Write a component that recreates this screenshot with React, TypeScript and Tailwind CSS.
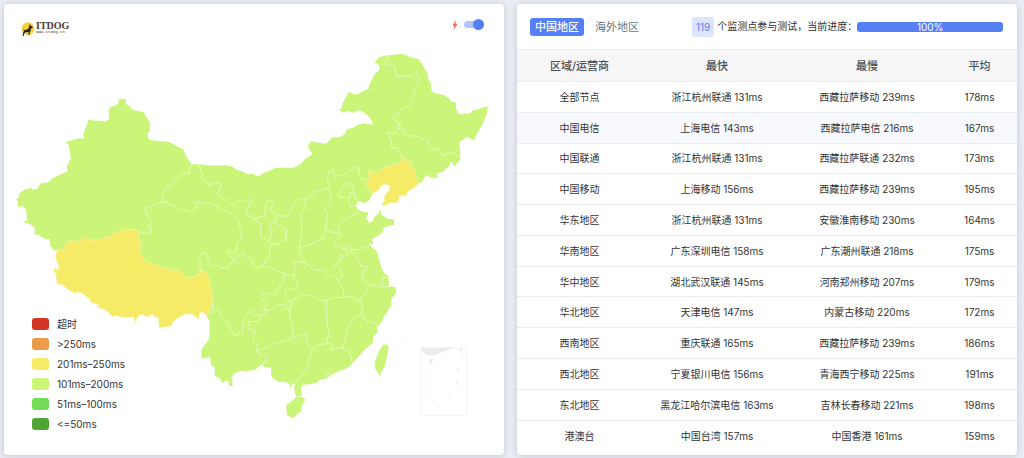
/**
 * Network latency dashboard
 *
 * Left card: provinces coloured by response time.
 * Right card: fastest / slowest / average time per region and carrier.
 */

import { useState } from "react";
import clsx from "clsx";

// =============================================================================
// DATA
// =============================================================================

const legend = [
  { label: "超时", color: "bg-[#d43527]" },
  { label: ">250ms", color: "bg-[#e99c4c]" },
  { label: "201ms–250ms", color: "bg-[#f5eb66]" },
  { label: "101ms–200ms", color: "bg-[#caf578]" },
  { label: "51ms–100ms", color: "bg-[#73db57]" },
  { label: "<=50ms", color: "bg-[#51a436]" },
];

const rows = [
  { region: "全部节点", fastest: "浙江杭州联通 131ms", slowest: "西藏拉萨移动 239ms", average: "178ms" },
  { region: "中国电信", fastest: "上海电信 143ms", slowest: "西藏拉萨电信 216ms", average: "167ms" },
  { region: "中国联通", fastest: "浙江杭州联通 131ms", slowest: "西藏拉萨联通 232ms", average: "173ms" },
  { region: "中国移动", fastest: "上海移动 156ms", slowest: "西藏拉萨移动 239ms", average: "195ms" },
  { region: "华东地区", fastest: "浙江杭州联通 131ms", slowest: "安徽淮南移动 230ms", average: "164ms" },
  { region: "华南地区", fastest: "广东深圳电信 158ms", slowest: "广东潮州联通 218ms", average: "175ms" },
  { region: "华中地区", fastest: "湖北武汉联通 145ms", slowest: "河南郑州移动 207ms", average: "179ms" },
  { region: "华北地区", fastest: "天津电信 147ms", slowest: "内蒙古移动 220ms", average: "172ms" },
  { region: "西南地区", fastest: "重庆联通 165ms", slowest: "西藏拉萨移动 239ms", average: "186ms" },
  { region: "西北地区", fastest: "宁夏银川电信 156ms", slowest: "青海西宁移动 225ms", average: "191ms" },
  { region: "东北地区", fastest: "黑龙江哈尔滨电信 163ms", slowest: "吉林长春移动 221ms", average: "198ms" },
  { region: "港澳台", fastest: "中国台湾 157ms", slowest: "中国香港 161ms", average: "159ms" },
];

// Outer coast and land border; the southwest part runs underneath Tibet
const mainland =
  "M50 598L60 592 58 582 70 573 80 566 86 568 96 561 99 569 114 567 120 556 127 548 144 548 153 542 158 535 203 515 203 494 209 489 210 482 215 478 208 435 199 426 240 414 255 418 252 403 268 358 283 362 306 362 316 365 326 360 330 354 328 330 333 322 352 314 358 310 357 298 378 296 380 312 390 318 400 330 422 334 435 339 441 352 450 363 453 375 450 383 453 392 445 398 446 410 450 419 470 422 510 426 538 442 552 447 560 468 577 493 598 493 645 497 683 496 702 501 712 511 727 513 742 522 763 521 768 527 777 529 793 519 832 503 882 503 902 494 915 479 939 463 926 440 935 423 960 429 980 431 998 412 1020 412 1036 403 1044 387 1062 383 1070 377 1090 370 1120 374 1118 362 1107 348 1088 333 1072 331 1062 339 1048 333 1032 338 1020 329 1027 324 1030 310 1048 276 1070 284 1108 266 1109 255 1120 235 1128 218 1138 212 1141 206 1138 193 1125 187 1140 172 1156 167 1208 161 1238 173 1257 177 1266 188 1276 206 1286 224 1287 238 1294 248 1296 268 1302 278 1335 286 1350 296 1356 305 1369 306 1371 326 1378 342 1412 340 1422 331 1440 327 1457 320 1471 318 1464 325 1463 342 1458 348 1453 365 1445 380 1433 400 1425 421 1401 411 1380 427 1384 472 1380 485 1370 490 1368 500 1360 494 1360 486 1352 488 1350 500 1340 505 1332 516 1313 519 1314 535 1290 531 1282 524 1272 538 1267 548 1258 550 1240 566 1224 575 1222 586 1200 588 1196 607 1170 609 1155 618 1147 610 1156 605 1155 590 1172 567 1170 556 1155 552 1142 560 1138 570 1120 580 1110 600 1095 610 1078 604 1070 615 1074 628 1090 635 1106 637 1106 643 1100 655 1110 668 1120 663 1126 650 1136 642 1143 628 1147 645 1165 656 1184 658 1184 674 1165 678 1150 686 1152 696 1140 704 1118 718 1122 732 1110 732 1117 742 1132 753 1140 780 1147 806 1156 820 1167 828 1169 858 1188 862 1191 880 1176 896 1176 918 1168 924 1165 936 1154 948 1148 965 1132 983 1135 995 1122 1010 1120 1030 1100 1045 1084 1063 1060 1090 1045 1104 1015 1115 995 1125 980 1137 960 1140 950 1150 910 1155 904 1165 908 1187 890 1190 885 1170 886 1152 878 1152 873 1167 870 1152 858 1146 840 1146 820 1135 815 1125 816 1104 795 1100 788 1093 775 1102 768 1110 755 1111 740 1115 732 1111 720 1114 703 1122 698 1130 700 1158 690 1158 688 1142 678 1142 668 1150 662 1134 645 1128 647 1102 635 1095 632 1070 607 1076 606 1050 630 1015 631 965 620 944 618 870 560 860 440 840 300 780 200 760 175 750 165 752 153 738 152 717 135 716 118 705 106 703 107 685 92 672 72 667 84 660 80 628 70 619 56 621 55 605Z";

const tibet =
  "M175 750L192 748 208 722 242 724 257 710 272 720 300 720 320 710 335 710 345 698 375 689 405 688 422 698 416 710 424 728 423 758 433 776 445 788 465 792 485 802 505 805 525 812 542 808 553 825 560 834 575 830 585 834 590 825 601 824 602 810 617 815 628 832 632 840 630 855 638 870 640 910 630 922 632 942 620 944 606 935 600 940 598 957 590 952 580 943 560 941 540 950 522 965 515 978 480 983 477 952 465 950 460 942 445 950 430 944 420 946 410 958 406 971 402 950 385 952 365 951 350 946 342 950 336 948 330 938 315 928 298 924 296 912 280 910 270 896 255 885 245 878 233 876 228 882 212 872 190 856 173 850 170 825 162 808 170 806 175 811 180 802 168 770Z";

const liaoning =
  "M1210 473L1222 478 1224 490 1235 486 1240 505 1247 512 1248 528 1256 540 1258 550 1240 566 1224 575 1222 586 1200 588 1196 607 1170 609 1155 618 1147 610 1156 605 1155 590 1172 567 1170 556 1155 552 1142 560 1138 570 1120 580 1110 565 1098 552 1110 538 1108 510 1118 510 1126 523 1155 502 1185 494 1205 486Z";

const hainan =
  "M890 1192L905 1190 918 1198 912 1210 906 1222 906 1235 892 1242 885 1253 875 1252 862 1244 861 1215 875 1205Z";

const taiwan =
  "M1160 1033L1168 1040 1165 1060 1156 1100 1146 1115 1142 1133 1138 1120 1126 1105 1127 1085 1140 1050 1150 1036Z";

// Province boundaries inside the mainland
const borders = [
  // Northwest
  "M577 493L570 505 572 517 548 523 525 542 518 555 500 560 485 608 465 614 433 626 442 632 443 645 460 668 447 678 455 687 454 700 430 698 418 694",
  "M485 608L502 604 508 613 525 617 538 629 562 631 576 636 588 628 592 608 606 608 620 612 635 609 650 619 665 627 680 632 705 648 720 663 721 680 729 698 723 717 716 728 712 745 705 760 694 755 682 754 692 768 702 775 706 782 690 792 688 802 670 805 658 797 642 798 628 787 622 763 610 758 600 770 603 782 602 808",
  "M706 782L720 767 728 757 740 770 757 775 763 800 780 804 792 797",
  "M598 493L610 527 605 532 625 545 627 557 650 547 665 553 664 565 652 580 675 597 688 612 702 617 710 606 740 604 754 597 755 610 742 630 742 642 764 657",
  "M764 657L778 652 796 648 797 625 805 603 815 600 820 608 814 632 830 642 848 650 868 645 875 628 890 605 900 598 920 596",
  "M764 657L782 670 786 710 810 725 812 710 820 708 813 690 812 670 825 667 830 660 830 642",
  "M825 667L862 690 860 720 842 725 838 733 815 730 810 750 812 775 798 780 792 797",
  // North
  "M920 596L916 625 903 648 908 665 905 710 900 745 908 775 922 792",
  "M920 596L927 588 940 588 947 573 970 570 988 563 992 555 984 540 988 515 1000 512 1007 530 1030 525 1045 518 1068 498 1078 505 1082 530 1088 538 1108 538",
  "M988 563L993 580 997 600 988 614 975 630 985 645 978 690 970 717 940 730 900 745",
  "M978 690L1000 697 1017 698 1020 675 1042 655 1062 645 1078 635",
  "M1042 547L1058 557 1063 575 1053 578 1052 592 1022 592 1018 582 1030 560Z",
  "M1053 578L1065 577 1066 590 1075 603 1070 618 1054 620 1048 605 1052 592",
  // Northeast
  "M1163 167L1168 180 1153 192 1172 197 1185 200 1193 230 1235 228 1250 220 1260 238 1245 270 1243 295 1229 323 1220 319 1180 353 1198 370 1197 385 1212 385 1222 408 1240 407 1260 412 1285 418 1290 435 1305 450 1315 442 1330 468 1350 458 1365 460 1384 472",
  "M1195 372L1206 362M1196 374L1208 372",
  "M1198 385L1188 400 1165 397 1175 420 1178 445 1195 442 1205 470",
  // Centre and east
  "M1017 698L1028 702 1005 728 1022 744 1038 745 1045 736 1060 750 1082 748 1090 738 1105 742 1112 732",
  "M1038 745L1065 762 1080 780 1085 800 1105 800 1103 810 1090 812 1088 835 1115 855 1145 862 1150 858 1169 861",
  "M1038 745L1045 765 1032 772 1024 762 1020 785 1005 795 1025 807 1028 828 1017 840",
  "M922 792L945 810 975 812 985 828 1000 826 1017 840 1033 870 1033 892",
  "M922 792L912 786 882 788 892 800 882 818 885 825 882 832 895 848 890 865 858 872 858 895 876 908",
  "M792 797L815 805 840 815 855 820 872 828 885 825",
  "M855 820L855 840 840 860 828 882 810 882 792 877 785 895 805 910 792 930 810 932 835 915 855 912 870 935 876 908",
  "M876 908L880 900 910 885 935 888 960 900 985 902 1000 893 1033 892 1050 888 1082 903 1095 880 1110 862 1115 855",
  "M1148 860L1150 832 1167 834",
  "M985 902L980 930 983 970 988 1000 982 1030 1000 1032 995 1050 1012 1045 1030 1045 1050 1055 1060 1090",
  "M1082 903L1088 920 1088 942 1100 962 1122 968 1136 980",
  "M1088 942L1062 955 1045 985 1038 1015 1030 1045",
  // South and southwest
  "M876 908L870 945 880 980 880 1013 920 1002 922 1030 938 1050 955 1036 982 1030",
  "M880 1013L860 1022 825 1030 805 1042 772 1052 775 1030 760 1020 768 992 745 985 750 965 780 965 785 945 802 938 790 925 810 932",
  "M640 910L640 938 655 925 665 950 685 965 705 1008 728 1000 732 960 755 930 762 945 785 945",
  "M772 1052L785 1065 802 1070 802 1085 788 1093",
  "M938 1050L925 1100 895 1142 880 1152",
  "M980 1132L984 1119 994 1118 998 1128 986 1130",
];

// =============================================================================
// MAP CARD
// =============================================================================

function Logo() {
  return (
    <a href="#" className="flex items-center gap-px pt-2 text-[#4a3c38]">
      <svg viewBox="0 0 42 42" className="size-3.5" aria-hidden="true">
        <circle cx="21" cy="20" r="19" fill="#f3cf3c" />
        <path
          d="M26 6l3 5 6 3-1 4-5 2 0 7-3 4 0 8-3 0-1-9-9 1-4 5 0 5-4 1 1-9 3-6-2-6 3 3 7-1 6-4z"
          fill="#2c2620"
        />
      </svg>
      <span className="flex flex-col">
        <span className="font-['Liberation_Serif',serif] text-[10px] leading-[8px] font-bold">ITDOG</span>
        <span className="font-['Liberation_Mono',monospace] text-[4px] leading-[5px]">www.itdog.cn</span>
      </span>
    </a>
  );
}

function ChinaMap() {
  return (
    <svg viewBox="14 135 1500 1220" className="block w-full" role="img" aria-label="中国地区">
      <g strokeLinejoin="round" strokeLinecap="round">
        <path d={mainland} fill="#caf578" />
        <path d={hainan} fill="#caf578" />
        <path d={taiwan} fill="#caf578" />
        <path d={borders.join("")} fill="none" stroke="#e4fabb" strokeWidth="3" />
        <path d={tibet} fill="#f5eb66" stroke="#faf5b4" strokeWidth="2" />
        <path d={liaoning} fill="#f5eb66" stroke="#faf5b4" strokeWidth="2" />
        <path d="M890 1190L908 1188" stroke="#e4fabb" strokeWidth="3" />
      </g>

      {/* South China Sea inset */}
      <rect x="1264" y="1042" width="138" height="204" fill="none" stroke="#f4f4f4" strokeWidth="3" />
      <g fill="#ececec">
        <path d="M1266 1044L1360 1044 1330 1056 1300 1067 1280 1064 1266 1052Z" />
        <path d="M1290 1080L1302 1075 1299 1088 1290 1091ZM1379 1044L1390 1044 1386 1056Z" />
        <circle cx="1210" cy="1015" r="3" />
      </g>
      <path
        d="M1396 1060L1389 1075M1378 1104L1377 1116M1375 1143L1371 1155M1356 1182L1347 1197M1324 1221L1314 1224M1278 1185L1281 1194M1290 1157L1299 1148M1291 1115L1294 1122"
        fill="none"
        stroke="#eeeeee"
        strokeWidth="3"
      />
    </svg>
  );
}

function MapCard() {
  return (
    <section className="relative rounded bg-white shadow-[0_1px_6px_rgba(60,70,100,0.22)]">
      <header className="flex h-[41px] items-center justify-between pr-5 pl-[17px]">
        <Logo />
        <label className="flex items-center gap-1.5">
          <svg viewBox="0 0 18 30" className="h-2.5 w-1.5" aria-label="fast mode">
            <path d="M12 0L1 17 7 17 5 30 17 11 10 11Z" fill="#ee6660" />
          </svg>
          <input
            type="checkbox"
            role="switch"
            defaultChecked
            className="relative h-[7px] w-5 appearance-none rounded-full bg-[#b0c4fa] before:absolute before:-top-0.5 before:right-0 before:size-[11px] before:rounded-full before:bg-[#557ff5]"
          />
        </label>
      </header>

      <ChinaMap />

      <ul className="absolute bottom-[21px] left-7 text-[10px] text-[#333]">
        {legend.map((item) => (
          <li key={item.label} className="flex h-5 items-center gap-2">
            <span className={clsx("h-3 w-[17px] rounded-[3px]", item.color)} />
            {item.label}
          </li>
        ))}
      </ul>
    </section>
  );
}

// =============================================================================
// RESULTS CARD
// =============================================================================

function ResultsCard() {
  const [tab, setTab] = useState("中国地区");

  return (
    <section className="flex flex-col rounded bg-white pb-1 shadow-[0_1px_6px_rgba(60,70,100,0.22)]">
      <header className="flex h-[45px] items-center pr-3.5">
        <nav className="flex w-[36%] shrink-0 gap-1.5 pl-[13px]">
          {["中国地区", "海外地区"].map((name) => (
            <button
              key={name}
              type="button"
              onClick={() => setTab(name)}
              className={clsx(
                "h-[18px] rounded-[3px] px-[5px] text-[11px] leading-[18px] whitespace-nowrap",
                tab === name ? "bg-[#557ff5] font-medium text-white" : "text-[#6c757d]",
              )}
            >
              {name}
            </button>
          ))}
        </nav>
        <span className="rounded-[3px] bg-[#dde5fd] px-1 text-[10px] leading-5 text-[#557ff5]">119</span>
        <span className="pl-[3px] text-[10px] whitespace-nowrap text-[#333]">个监测点参与测试，当前进度：</span>
        <div
          role="progressbar"
          aria-valuenow={100}
          className="h-2.5 min-w-0 flex-1 rounded-[3px] bg-[#557ff5] text-center text-[10px] leading-[10px] text-white"
        >
          100%
        </div>
      </header>

      <table className="w-full flex-1 table-fixed border-collapse text-center text-[10px] leading-4 text-[#333]">
        <thead>
          <tr className="h-8 border-y border-[#e9ecef] bg-[#f6f6f7] text-[11px] text-[#495057]">
            <th className="w-[25%] font-medium">区域/运营商</th>
            <th className="w-[30%] font-medium">最快</th>
            <th className="w-[30%] font-medium">最慢</th>
            <th className="w-[15%] font-medium">平均</th>
          </tr>
        </thead>
        <tbody>
          {rows.map((row, i) => (
            <tr
              key={row.region}
              className={clsx("h-[30px] border-b border-[#e9ecf2] last:border-b-0", i === 1 && "bg-[#f9faff]")}
            >
              <td>{row.region}</td>
              <td>{row.fastest}</td>
              <td>{row.slowest}</td>
              <td>{row.average}</td>
            </tr>
          ))}
        </tbody>
      </table>
    </section>
  );
}

export default function App() {
  return (
    <main className="grid min-h-screen grid-cols-2 gap-[13px] bg-[#e9ecf2] pt-1 pr-[7px] pb-[3px] pl-1 font-[Inter,'Noto_Sans_CJK_SC',sans-serif]">
      <MapCard />
      <ResultsCard />
    </main>
  );
}
